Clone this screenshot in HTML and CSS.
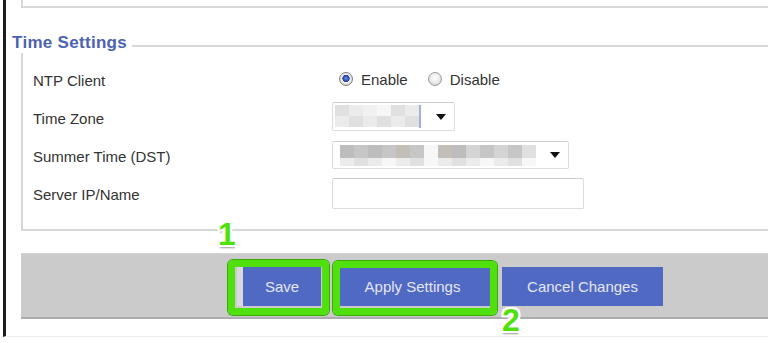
FILE: index.html
```html
<!DOCTYPE html>
<html>
    <head>
        <link rel="stylesheet" href="styles.css">
    </head>
    <body>
        <div class="page">
            <div class="prev-box"></div>

            <div class="section-head">
                <span class="section-title">Time Settings</span>
                <span class="section-line"></span>
            </div>
            <div class="section-box">
                <div class="row">
                    <span class="label">NTP Client</span>
                    <div class="radios">
                        <span class="radio checked"></span><span class="radio-text">Enable</span>
                        <span class="radio"></span><span class="radio-text">Disable</span>
                    </div>
                </div>
                <div class="row">
                    <span class="label">Time Zone</span>
                    <div class="select tz">
                        <div class="blur tz-blur">
                            <i class="c2"></i><i class="c3"></i><i class="c1"></i><i class="c4"></i><i class="c2"></i><i class="c3"></i>
                            <i class="c3"></i><i class="c2"></i><i class="c3"></i><i class="c2"></i><i class="c3"></i><i class="c2"></i>
                        </div>
                        <span class="arrow"></span>
                    </div>
                </div>
                <div class="row">
                    <span class="label">Summer Time (DST)</span>
                    <div class="select dst">
                        <div class="blur dst-blur">
                            <i class="d1"></i><i class="d2"></i><i class="d1"></i><i class="d2"></i><i class="d5"></i><i class="d2"></i><i class="c4"></i><i class="d5"></i><i class="d1"></i><i class="d3"></i><i class="d2"></i><i class="d3"></i><i class="d2"></i><i class="c2"></i>
                            <i class="c3"></i><i class="c2"></i><i class="c3"></i><i class="c4"></i><i class="c3"></i><i class="c2"></i><i class="c4"></i><i class="c3"></i><i class="c2"></i><i class="c3"></i><i class="c4"></i><i class="c3"></i><i class="c2"></i><i class="c4"></i>
                        </div>
                        <span class="arrow"></span>
                    </div>
                </div>
                <div class="row">
                    <span class="label">Server IP/Name</span>
                    <input class="text-input" type="text">
                </div>
            </div>

            <div class="button-bar">
                <button class="btn save">Save</button>
                <button class="btn apply">Apply Settings</button>
                <button class="btn cancel">Cancel Changes</button>

                <div class="mark mark-save"></div>
                <div class="mark mark-apply"></div>
                <span class="step step-1">1</span>
                <span class="step step-2">2</span>
            </div>
        </div>
    </body>
</html>
```

FILE: styles.css
```css
* {
    box-sizing: border-box;
}

html, body {
    margin: 0;
    height: 100%;
    background: #ffffff;
    overflow: hidden;
}

body {
    font-family: "Liberation Sans", Arial, sans-serif;
    font-size: 15px;
    color: #333333;
}

.page {
    margin-left: 3px;
    height: 337px;
    border-left: 3px solid #1c1c1c;
    border-bottom: 1px solid #efefef;
}

.prev-box {
    margin-left: 15px;
    height: 8px;
    border-left: 2px solid #d8d8d8;
    border-bottom: 2px solid #d8d8d8;
}

.section-head {
    display: flex;
    margin-top: 25px;
    margin-left: 6px;
    height: 20px;
}

.section-title {
    font-size: 17px;
    line-height: 20px;
    font-weight: bold;
    letter-spacing: 0.3px;
    color: #4c62b2;
}

.section-line {
    flex: 1;
    margin-left: 5px;
    margin-top: 12px;
    height: 0;
    border-top: 2px solid #d8d8d8;
}

.section-box {
    margin-left: 15px;
    padding: 8px 0 16px 10px;
    border-left: 2px solid #d8d8d8;
    border-bottom: 2px solid #d8d8d8;
}

.row {
    display: flex;
    align-items: center;
    height: 38px;
}

.label {
    width: 299px;
    flex: none;
}

.radios {
    display: flex;
    align-items: center;
    margin-left: 7px;
    margin-top: -2px;
}

.radio {
    width: 14px;
    height: 14px;
    border-radius: 50%;
    border: 1px solid #9a9a9a;
    background: radial-gradient(circle at 50% 40%, #ffffff 0%, #e8e8e8 55%, #c4c4c4 100%);
}

.radio.checked {
    border-color: #7e7e7e;
    background: radial-gradient(circle at 50% 45%, #6f8be0 0%, #2f4fb8 30%, #27408f 38%, #f4f4f4 44%, #d6d6d6 75%, #ababab 100%);
}

.radio-text {
    margin-left: 8px;
    margin-right: 20px;
}

.select {
    display: flex;
    align-items: center;
    height: 29px;
    border: 1px solid #dcdcdc;
    border-top-color: #cfcfcf;
    border-radius: 2px;
    background: #ffffff;
}

.select.tz {
    width: 123px;
    margin-top: -3px;
}

.select.dst {
    width: 237px;
    height: 28px;
    margin-top: -2px;
}

.blur {
    display: grid;
    grid-auto-rows: 11px;
}

.blur i {
    display: block;
}

.tz-blur {
    grid-template-columns: repeat(6, 14px);
    margin-left: 2px;
    height: 23px;
    border-right: 2px solid #a3b0de;
}

.dst-blur {
    grid-template-columns: repeat(14, 14px);
    grid-template-rows: 13px 8px;
    margin-left: 7px;
}

.c1 { background: #f1f1f1; }
.c2 { background: #e0e0e0; }
.c3 { background: #ebebeb; }
.c4 { background: #f7f7f7; }
.d1 { background: #bdbdbd; }
.d2 { background: #c6c6c6; }
.d3 { background: #d4d4d4; }
.d5 { background: #c3beb6; }

.arrow {
    margin-left: auto;
    margin-right: 8px;
    width: 0;
    height: 0;
    border-left: 5px solid transparent;
    border-right: 5px solid transparent;
    border-top: 6px solid #111111;
}

.text-input {
    width: 252px;
    height: 31px;
    border: 1px solid #dcdcdc;
    border-top-color: #cdcdcd;
    border-radius: 2px;
    background: #ffffff;
    margin-top: -1px;
}

.button-bar {
    position: relative;
    display: flex;
    align-items: center;
    margin-top: 22px;
    margin-left: 15px;
    height: 66px;
    padding-left: 216px;
    background: #cbcbcb;
    border-top: 1px solid #d4d4d4;
    border-bottom: 2px solid #acacac;
}

.btn {
    height: 39px;
    border: none;
    background: #5069c3;
    color: #e3e6f2;
    font-family: "Liberation Sans", Arial, sans-serif;
    font-size: 15px;
    padding: 0;
    margin-top: 2px;
}

.save {
    width: 84px;
    border-left: 6px solid #d9d9de;
}

.apply {
    width: 155px;
    margin-left: 14px;
}

.cancel {
    width: 161px;
    margin-left: 12px;
}

.mark {
    position: absolute;
    border: 7px solid #4fe00e;
    border-radius: 5px;
    box-shadow: 0 0 0 1px #3aa80a;
}

.mark-save {
    left: 207px;
    top: 6px;
    width: 101px;
    height: 55px;
}

.mark-apply {
    left: 312px;
    top: 7px;
    width: 164px;
    height: 54px;
}

.step {
    position: absolute;
    font-size: 32px;
    line-height: 32px;
    font-weight: bold;
    color: #4fe00e;
    text-shadow: 2px 0 #ffffff, -2px 0 #ffffff, 0 2px #ffffff, 0 -2px #ffffff,
        2px 2px #ffffff, -2px -2px #ffffff, 2px -2px #ffffff, -2px 2px #ffffff,
        0 3px 2px #9a9a9a;
}

.step-1 {
    left: 197px;
    top: -36px;
}

.step-2 {
    left: 481px;
    top: 50px;
}
```
